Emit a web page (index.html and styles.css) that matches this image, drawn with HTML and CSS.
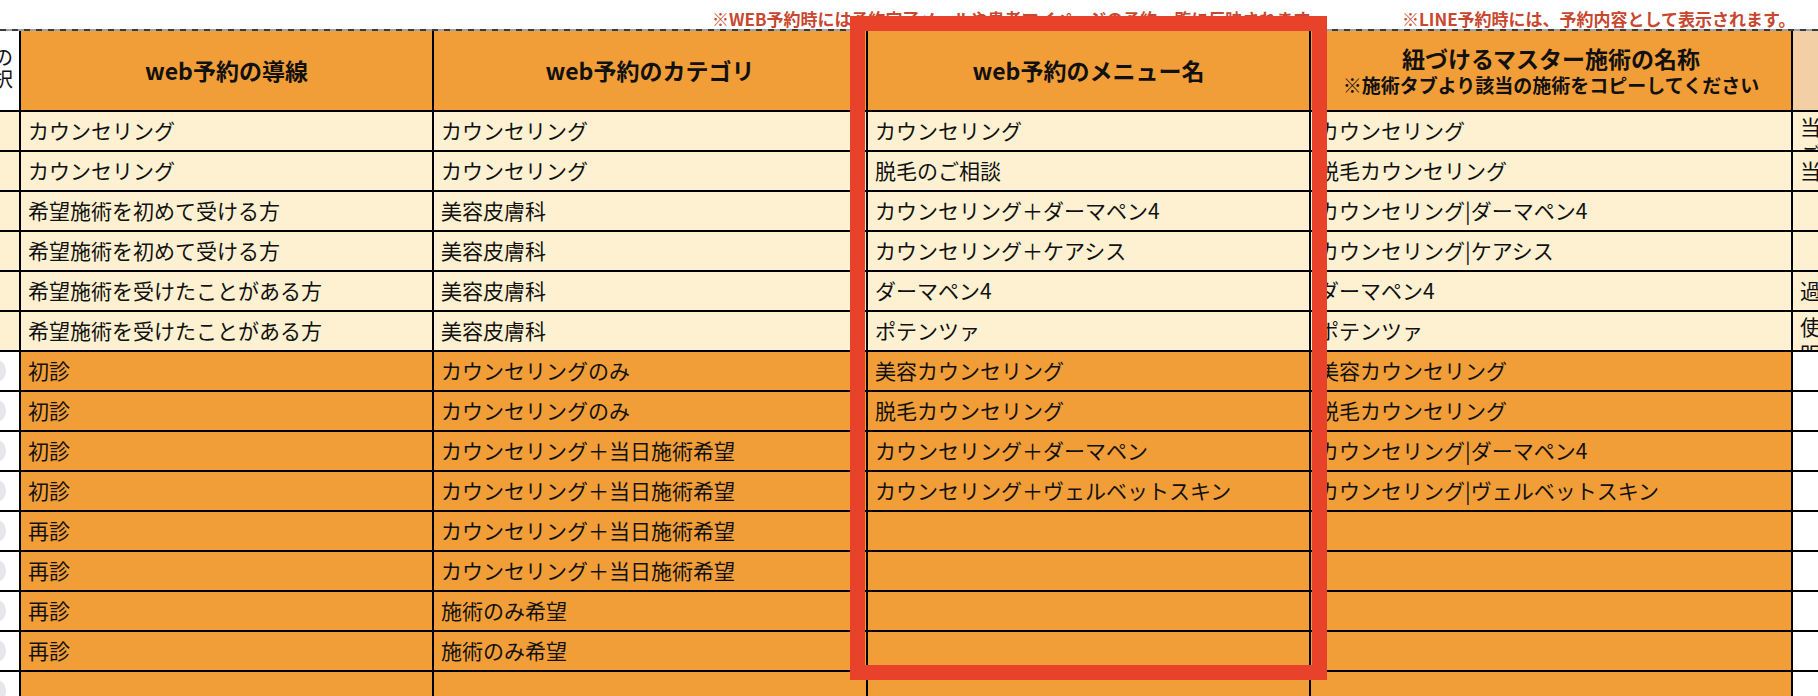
FILE: index.html
```html
<!DOCTYPE html>
<html lang="ja">
<head>
<meta charset="utf-8">
<title>web予約 設定シート</title>
<link rel="stylesheet" href="styles.css">
</head>
<body>
<div class="page">
  <div class="notes">
    <span class="note note-web">※WEB予約時には予約完了メールや患者マイページの予約一覧に反映されます。</span>
    <span class="note">※LINE予約時には、予約内容として表示されます。</span>
  </div>
  <div class="topline"></div>
  <div class="sheet">
    <div class="c white side-head">表示の<br>選択</div>
    <div class="c orange h">web予約の導線</div>
    <div class="c orange h">web予約のカテゴリ</div>
    <div class="c orange h">web予約のメニュー名</div>
    <div class="c orange h h2"><span class="h-main">紐づけるマスター施術の名称</span><span class="h-sub">※施術タブより該当の施術をコピーしてください</span></div>
    <div class="c peach"></div>

    <div class="c cream"></div><div class="c cream">カウンセリング</div><div class="c cream">カウンセリング</div><div class="c cream">カウンセリング</div><div class="c cream">カウンセリング</div><div class="c cream wrap">当日ご来院の際は<br>ご来院時間をお知らせください</div>
    <div class="c cream"></div><div class="c cream">カウンセリング</div><div class="c cream">カウンセリング</div><div class="c cream">脱毛のご相談</div><div class="c cream">脱毛カウンセリング</div><div class="c cream">当院の脱毛についてご相談いただけます</div>
    <div class="c cream"></div><div class="c cream">希望施術を初めて受ける方</div><div class="c cream">美容皮膚科</div><div class="c cream">カウンセリング＋ダーマペン4</div><div class="c cream">カウンセリング|ダーマペン4</div><div class="c cream"></div>
    <div class="c cream"></div><div class="c cream">希望施術を初めて受ける方</div><div class="c cream">美容皮膚科</div><div class="c cream">カウンセリング＋ケアシス</div><div class="c cream">カウンセリング|ケアシス</div><div class="c cream"></div>
    <div class="c cream"></div><div class="c cream">希望施術を受けたことがある方</div><div class="c cream">美容皮膚科</div><div class="c cream">ダーマペン4</div><div class="c cream">ダーマペン4</div><div class="c cream">過去に施術を受けた方</div>
    <div class="c cream"></div><div class="c cream">希望施術を受けたことがある方</div><div class="c cream">美容皮膚科</div><div class="c cream">ポテンツァ</div><div class="c cream">ポテンツァ</div><div class="c cream wrap">使用する薬剤は<br>明日以降にご案内します</div>

    <div class="c white"><span class="dot"></span></div><div class="c orange">初診</div><div class="c orange">カウンセリングのみ</div><div class="c orange">美容カウンセリング</div><div class="c orange">美容カウンセリング</div><div class="c white"></div>
    <div class="c white"><span class="dot"></span></div><div class="c orange">初診</div><div class="c orange">カウンセリングのみ</div><div class="c orange">脱毛カウンセリング</div><div class="c orange">脱毛カウンセリング</div><div class="c white"></div>
    <div class="c white"><span class="dot"></span></div><div class="c orange">初診</div><div class="c orange">カウンセリング＋当日施術希望</div><div class="c orange">カウンセリング＋ダーマペン</div><div class="c orange">カウンセリング|ダーマペン4</div><div class="c white"></div>
    <div class="c white"><span class="dot"></span></div><div class="c orange">初診</div><div class="c orange">カウンセリング＋当日施術希望</div><div class="c orange">カウンセリング＋ヴェルベットスキン</div><div class="c orange">カウンセリング|ヴェルベットスキン</div><div class="c white"></div>
    <div class="c white"><span class="dot"></span></div><div class="c orange">再診</div><div class="c orange">カウンセリング＋当日施術希望</div><div class="c orange"></div><div class="c orange"></div><div class="c white"></div>
    <div class="c white"><span class="dot"></span></div><div class="c orange">再診</div><div class="c orange">カウンセリング＋当日施術希望</div><div class="c orange"></div><div class="c orange"></div><div class="c white"></div>
    <div class="c white"><span class="dot"></span></div><div class="c orange">再診</div><div class="c orange">施術のみ希望</div><div class="c orange"></div><div class="c orange"></div><div class="c white"></div>
    <div class="c white"><span class="dot"></span></div><div class="c orange">再診</div><div class="c orange">施術のみ希望</div><div class="c orange"></div><div class="c orange"></div><div class="c white"></div>
    <div class="c white"><span class="dot"></span></div><div class="c orange"></div><div class="c orange"></div><div class="c orange"></div><div class="c orange"></div><div class="c white"></div>
  </div>
  <div class="highlight"></div>
</div>
</body>
</html>
```

FILE: styles.css
```css
html, body {
  margin: 0;
  padding: 0;
  background: #ffffff;
  overflow: hidden;
}

body {
  width: 1818px;
  height: 696px;
  font-family: "Noto Sans CJK JP", "Noto Sans", sans-serif;
  color: #111111;
}

.page {
  position: relative;
  width: 1818px;
  height: 696px;
  overflow: hidden;
}

.notes {
  height: 29px;
  display: flex;
  align-items: flex-end;
  padding-left: 712px;
  box-sizing: border-box;
  padding-bottom: 2px;
}

.note {
  font-size: 17px;
  font-weight: 700;
  line-height: 1;
  color: #c8472f;
  white-space: nowrap;
}

.note-web {
  width: 690px;
  flex: none;
}

.topline {
  width: 100%;
  height: 2px;
  background: repeating-linear-gradient(90deg, #3a3a3a 0 6px, #9aa4ae 6px 12px);
}

.sheet {
  display: grid;
  grid-template-columns: 19px 411px 432px 441px 480px 400px;
  grid-template-rows: 79px;
  grid-auto-rows: 38px;
  column-gap: 2px;
  row-gap: 2px;
  background: #000000;
  width: max-content;
}

.c {
  display: flex;
  align-items: center;
  padding: 0 7px;
  font-size: 21px;
  line-height: 1.2;
  white-space: nowrap;
  overflow: hidden;
  min-width: 0;
}

.white { background: #ffffff; }
.cream { background: #fdf1d1; }
.orange { background: #f19e38; }
.peach { background: #f3cfa6; }

.h {
  justify-content: center;
  text-align: center;
  font-size: 23px;
  font-weight: 700;
}

.h2 {
  flex-direction: column;
  justify-content: center;
  line-height: 1;
}

.h-main {
  display: block;
  font-size: 23px;
  line-height: 28px;
}

.h-sub {
  display: block;
  font-size: 19px;
  line-height: 25px;
}

.side-head {
  justify-content: flex-end;
  text-align: right;
  padding: 0 6px 6px 0;
  font-size: 20px;
  line-height: 22px;
}

.wrap {
  align-items: flex-start;
  padding-top: 1px;
  line-height: 27px;
}

.dot {
  flex: none;
  width: 24px;
  height: 24px;
  border-radius: 50%;
  background: #e6e6ec;
  margin-left: -25px;
}

.highlight {
  position: absolute;
  left: 850px;
  top: 16px;
  width: 477px;
  height: 664px;
  border: 15px solid #e8422a;
  box-sizing: border-box;
}
```
